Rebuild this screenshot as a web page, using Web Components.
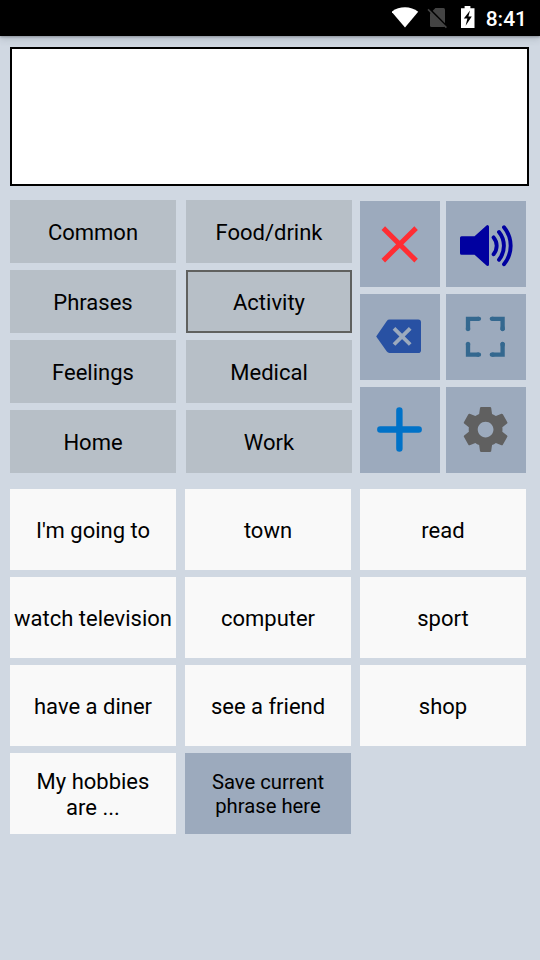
<!DOCTYPE html>
<html lang="en">
<head>
<meta charset="utf-8">
<title>Phrases</title>
<style>
html,body{margin:0;height:100%;overflow:hidden}
body{background:#d0d8e2;font-family:Roboto,sans-serif;color:#000}
</style>
</head>
<body>
<speech-app></speech-app>
<script>
const define = (name, html) => {
  const t = document.createElement('template');
  t.innerHTML = html;
  customElements.define(name, class extends HTMLElement {
    constructor() {
      super();
      this.attachShadow({mode: 'open'}).appendChild(t.content.cloneNode(true));
    }
  });
};

define('status-bar', `
<style>
:host{display:flex;height:36px;flex:none;background:#000;color:#fff;box-sizing:border-box;padding-right:13px;justify-content:flex-end;align-items:center;font-size:21px;font-weight:500;box-shadow:0 1px 2px rgba(60,65,75,.4),0 3px 7px rgba(60,65,75,.18)}
svg{flex:none}
span{line-height:36px;padding-top:1px}
</style>
<svg width="94" height="36" viewBox="0 0 94 36">
<path fill="#fff" d="M-0.4 11.7C7 5.7 19 5.7 26.2 11.7L13 27.6Z"/>
<path fill="#444" d="M43.4 8H51.5Q53 8 53 9.5V25.5Q53 27 51.5 27H39.5Q38 27 38 25.5V13.4Z"/>
<path stroke="#000" stroke-width="2" d="M37 8.5L54.5 26.2"/>
<path stroke="#444" stroke-width="1.5" d="M36 9.4L54.4 27.6"/>
<path fill="#fff" d="M69 8.2H72.6V6.1H78.4V8.2H82.5V28H69Z"/>
<path fill="#000" d="M78 10.5L71.8 18.6H75.4L73.6 25.8L79.8 16.6H76.4Z"/>
</svg>
<span>8:41</span>`);

define('phrase-field', `<style>:host{display:block;box-sizing:border-box;width:519px;height:139px;border:2px solid #000;background:#fff}</style><slot></slot>`);

define('category-button', `
<style>
:host{display:flex;align-items:center;justify-content:center;box-sizing:border-box;background:#b7bfc7;font-size:22px;line-height:26px;padding:3px 0 0 0}
:host([selected]){border:2px solid #60615f}
</style><slot></slot>`);

define('phrase-button', `
<style>
:host{display:flex;align-items:center;justify-content:center;text-align:center;box-sizing:border-box;background:#f9f9f9;font-size:22px;line-height:26px;padding:3px 0 0 0;white-space:nowrap}
:host([save]){background:#9caabd;font-size:20.25px;line-height:24px;padding:0}
</style><div><slot></slot></div>`);

define('tool-button', `<style>:host{display:block;background:#9caabd}</style><slot></slot>`);

define('category-grid', `<style>:host{display:grid;grid-template-columns:166px 166px;grid-auto-rows:63px;gap:7px 10px}</style><slot></slot>`);
define('tool-grid', `<style>:host{display:grid;grid-template-columns:80px 80px;grid-auto-rows:86px;gap:7px 6px;padding-top:1px}::slotted(*){overflow:hidden}</style><slot></slot>`);
define('phrase-grid', `<style>:host{display:grid;grid-template-columns:repeat(3,166px);grid-auto-rows:81px;gap:7px 9px}</style><slot></slot>`);

define('speech-app', `
<style>
:host{display:flex;flex-direction:column;height:960px;width:540px}
main{padding:11px 0 0 10px}
.controls{display:flex;gap:8px;margin:14px 0 16px}
svg{display:block;width:80px;height:86px;fill:none}
</style>
<status-bar></status-bar>
<main>
<phrase-field></phrase-field>
<div class="controls">
<category-grid>
<category-button>Common</category-button><category-button>Food/drink</category-button>
<category-button>Phrases</category-button><category-button selected>Activity</category-button>
<category-button>Feelings</category-button><category-button>Medical</category-button>
<category-button>Home</category-button><category-button>Work</category-button>
</category-grid>
<tool-grid>
<tool-button><svg viewBox="0 0 80 86"><path stroke="#ff2d33" stroke-width="5" d="M23.3 27.1L56.1 59.6M56.1 27.1L23.3 59.6"/></svg></tool-button>
<tool-button><svg viewBox="0 0 80 86" stroke="#0000a0" stroke-linecap="round" stroke-linejoin="round"><path fill="#0000a0" stroke-width="3" d="M15.5 36.8H29L41.5 25.7V63.4L29 52.2H15.5Z"/><path stroke-width="3.9" d="M47.6 36.4A13 13 0 0 1 47.6 53.2M53 31A22 22 0 0 1 53 58.7M58 26.2A29 29 0 0 1 58 63.2"/></svg></tool-button>
<tool-button><svg viewBox="0 0 80 86"><path fill="#2851a3" d="M16.2 42.4L26.8 27Q27.9 25.6 29.5 25.6H58.2Q61 25.6 61 28.4V56.2Q61 59 58.2 59H29.5Q27.9 59 26.8 57.6Z"/><path stroke="#9caabd" stroke-width="3.8" d="M34 34.3L50.2 50.5M50.2 34.3L34 50.5"/></svg></tool-button>
<tool-button><svg viewBox="0 0 80 86" stroke="#34688f" stroke-width="4.3"><path d="M22 36V24.8H33M45.8 24.8H56.6V36M22 49V60.7H33M45.8 60.7H56.6V49"/><path stroke-linecap="round" d="M22 35.2V34M33 24.8H32M45.8 24.8H47M56.6 35.2V34M22 50V51M33 60.7H32M45.8 60.7H47M56.6 50V51"/></svg></tool-button>
<tool-button><svg viewBox="0 0 80 86" stroke="#0072c8" stroke-width="6.4" stroke-linecap="round"><path d="M39.4 23.4V61.6M20.3 42.5H58.7"/></svg></tool-button>
<tool-button><svg viewBox="0 0 80 86"><path fill="#606060" transform="translate(12.6 15.5) scale(2.25)" d="M19.43 12.98c.04-.32.07-.64.07-.98s-.03-.66-.07-.98l2.11-1.65c.19-.15.24-.42.12-.64l-2-3.46c-.12-.22-.39-.3-.61-.22l-2.49 1c-.52-.4-1.08-.73-1.69-.98l-.38-2.65C14.46 2.18 14.25 2 14 2h-4c-.25 0-.46.18-.49.42l-.38 2.65c-.61.25-1.17.59-1.69.98l-2.49-1c-.23-.09-.49 0-.61.22l-2 3.46c-.13.22-.07.49.12.64l2.11 1.65c-.04.32-.07.65-.07.98s.03.66.07.98l-2.11 1.65c-.19.15-.24.42-.12.64l2 3.46c.12.22.39.3.61.22l2.49-1c.52.4 1.08.73 1.69.98l.38 2.65c.03.24.24.42.49.42h4c.25 0 .46-.18.49-.42l.38-2.65c.61-.25 1.17-.59 1.69-.98l2.49 1c.23.09.49 0 .61-.22l2-3.46c.12-.22.07-.49-.12-.64l-2.11-1.65zM12 15.5c-1.93 0-3.5-1.57-3.5-3.5s1.57-3.5 3.5-3.5 3.5 1.57 3.5 3.5-1.57 3.5-3.5 3.5z"/></svg></tool-button>
</tool-grid>
</div>
<phrase-grid>
<phrase-button>I'm going to</phrase-button><phrase-button>town</phrase-button><phrase-button>read</phrase-button>
<phrase-button>watch television</phrase-button><phrase-button>computer</phrase-button><phrase-button>sport</phrase-button>
<phrase-button>have a diner</phrase-button><phrase-button>see a friend</phrase-button><phrase-button>shop</phrase-button>
<phrase-button>My hobbies<br>are ...</phrase-button><phrase-button save>Save current<br>phrase here</phrase-button>
</phrase-grid>
</main>`);
</script>
</body>
</html>
